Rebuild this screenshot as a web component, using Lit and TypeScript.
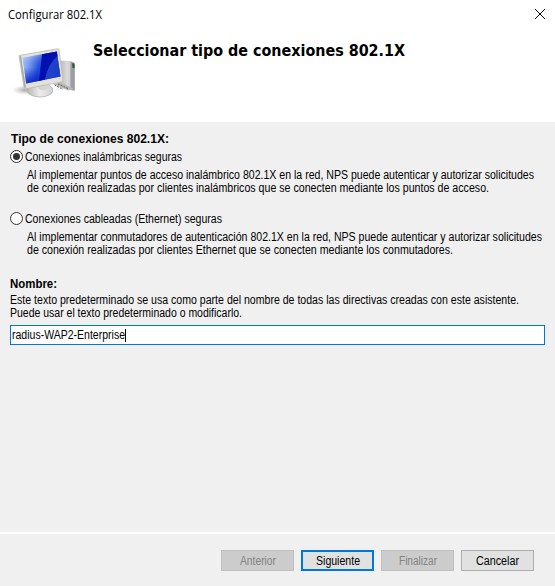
import { LitElement, html, css, svg } from "lit";
import { customElement, property, state } from "lit/decorators.js";

/* A single line of dialog text, condensed so that it fills a given width. */
@customElement("fit-line")
class FitLine extends LitElement {
  @property({ type: Number }) width = 0;
  @property() text = "";
  @state() private ratio = 1;

  static styles = css`
    :host { display: block; white-space: pre; }
    .box { display: block; }
    .line { display: inline-block; vertical-align: top; transform-origin: 0 0; }
  `;

  firstUpdated() {
    const span = this.renderRoot.querySelector(".line") as HTMLElement;
    this.ratio = this.width / span.getBoundingClientRect().width;
  }

  render() {
    return html`<span class="box" style="width:${this.width}px"><span class="line" style="transform:scaleX(${this.ratio})">${this.text}</span></span>`;
  }
}

interface Line { text: string; width: number; }
interface Option { label: Line; detail: Line[]; }

const options: Option[] = [
  {
    label: { text: "Conexiones inalámbricas seguras", width: 157 },
    detail: [
      { text: "Al implementar puntos de acceso inalámbrico 802.1X en la red, NPS puede autenticar y autorizar solicitudes", width: 507 },
      { text: "de conexión realizadas por clientes inalámbricos que se conecten mediante los puntos de acceso.", width: 462 },
    ],
  },
  {
    label: { text: "Conexiones cableadas (Ethernet) seguras", width: 197 },
    detail: [
      { text: "Al implementar conmutadores de autenticación 802.1X en la red, NPS puede autenticar y autorizar solicitudes", width: 515 },
      { text: "de conexión realizadas por clientes Ethernet que se conecten mediante los conmutadores.", width: 426 },
    ],
  },
];

const buttons = [
  { label: "Anterior", width: 36, kind: "off" },
  { label: "Siguiente", width: 44, kind: "main" },
  { label: "Finalizar", width: 38, kind: "off" },
  { label: "Cancelar", width: 43, kind: "" },
];

const computer = svg`
  <defs>
    <linearGradient id="screen" x1="0" y1="0" x2="1" y2="0.25">
      <stop offset="0" stop-color="#c4d8fc"/><stop offset=".25" stop-color="#7ea2f2"/>
      <stop offset=".5" stop-color="#2a55de"/><stop offset="1" stop-color="#0018b4"/>
    </linearGradient>
    <linearGradient id="shade" x1="0" y1="0" x2="0" y2="1">
      <stop offset="0" stop-color="#fff" stop-opacity=".3"/><stop offset=".45" stop-color="#0020c8" stop-opacity="0"/>
      <stop offset="1" stop-color="#0018c0" stop-opacity=".8"/>
    </linearGradient>
    <linearGradient id="tower" x1="0" y1="0" x2="1" y2="0">
      <stop offset="0" stop-color="#b0b0b0"/><stop offset=".55" stop-color="#dadada"/><stop offset="1" stop-color="#bcbcbc"/>
    </linearGradient>
    <linearGradient id="foot" x1="0" y1="0" x2="1" y2="0">
      <stop offset="0" stop-color="#b5b5b5"/><stop offset=".5" stop-color="#ededed"/><stop offset="1" stop-color="#d0d0d0"/>
    </linearGradient>
    <radialGradient id="shadow"><stop offset="0" stop-color="#777" stop-opacity=".65"/><stop offset="1" stop-color="#aaa" stop-opacity="0"/></radialGradient>
  </defs>
  <ellipse cx="13" cy="42" rx="13" ry="5" fill="url(#shadow)"/>
  <path d="M46 12.500 L58 13 L62.700 15 V42.500 L57 42 L46 36Z" fill="url(#tower)"/>
  <path d="M58.500 13.500 L62.700 15 V42.500 L58.500 42Z" fill="#9c9ca8"/>
  <path d="M60.300 15 L62.500 16 V20.500 L60.300 19.500Z" fill="#235b2a"/>
  <path d="M41 36 L49 34.500 L62 41 L56 42.500Z" fill="#b8b8b8"/>
  <path d="M42.500 37 L51 41.300 M46 36 L57 41" stroke="#666" stroke-width="1" stroke-dasharray="2 1"/>
  <ellipse cx="28" cy="42.200" rx="13" ry="6.800" fill="url(#foot)" stroke="#aaa" stroke-width=".7"/>
  <path d="M24 37 L37 35 L37 40 Q33 43.500 28 42Z" fill="#d6d6d6"/>
  <path d="M7 7.500 L45.500 .8 Q46.800 .6 47 2 L51 32 Q51.200 33.500 49.500 33.900 L14 40.800 Q12.300 41 12 39.500Z" fill="#e4e2dd" stroke="#b8b6b1" stroke-width=".8"/>
  <path d="M7.500 8.500 L9 8 L14 39.800 L12.500 40Z" fill="#aaa8a6"/>
  <path d="M10.500 9.800 L44.800 3.500 L48.500 28.500 L14.200 35.500Z" fill="url(#screen)"/>
  <path d="M10.500 9.800 L31.500 5.900 L27.500 32.800 L14.200 35.500Z" fill="url(#shade)"/>
  <path d="M30 6.200 L44.800 3.500 L45.500 8 Q36 16 33 31.600 L27 32.900Z" fill="#0010b0"/>
  <path d="M45.500 8 L48.500 28.500 L33 31.600 Q36 16 45.500 8Z" fill="#2348cc" opacity=".8"/>
`;

@customElement("app-root")
class AppRoot extends LitElement {
  @state() private selected = 0;

  static styles = css`
    :host {
      display: flex; flex-direction: column; box-sizing: border-box;
      width: 555px; height: 586px; overflow: hidden;
      background: #f0f0f0; color: #000;
      font: 12px/13px "Liberation Sans", Arial, sans-serif;
    }
    .header { height: 122px; background: #fff; flex: none; }
    .titlebar { display: flex; justify-content: space-between; padding: 7px 9px 0 8px; height: 31px; box-sizing: border-box; }
    .caption { font: 12px/16px "Open Sans", "Noto Sans", sans-serif; }
    .close { width: 12px; height: 12px; margin-top: 1px; }
    .banner { display: flex; align-items: flex-start; }
    .computer { width: 64px; height: 52px; margin: 17px 0 0 12px; }
    .heading { margin: 10px 0 0 17px; font: bold 16px/20px "DejaVu Sans Condensed", "DejaVu Sans", sans-serif; }
    .body { height: 410px; flex: none; box-sizing: border-box; padding: 11px 10px 0; }
    .section { font-weight: bold; margin-left: 1px; }
    .option { display: grid; grid-template-columns: 15px 1fr; height: 62px; align-content: start; padding-top: 4px; box-sizing: border-box; }
    .radio {
      width: 13px; height: 13px; box-sizing: border-box; border: 1px solid #333; border-radius: 50%;
      background: #fff; display: grid; place-items: center;
    }
    .radio.on::after { content: ""; width: 7px; height: 7px; border-radius: 50%; background: #333; }
    .label { padding-top: 1px; }
    .detail { grid-column: 2; margin: 5px 0 0 2px; }
    .name { margin: 8px 0 3px 0; }
    .field {
      display: flex; align-items: center; height: 20px; box-sizing: border-box; margin-top: 5px;
      border: 1px solid #0078d7; background: #fff; padding-left: 1px;
    }
    .caret { width: 1px; height: 13px; background: #000; }
    .footer {
      flex: 1; display: flex; justify-content: flex-end; gap: 7px; box-sizing: border-box;
      border-top: 2px solid #fff; padding: 16px 21px 0 0;
    }
    .button {
      width: 73px; height: 21px; box-sizing: border-box; border: 1px solid #adadad; background: #e1e1e1;
      display: flex; justify-content: center; align-items: center; padding-top: 2px;
    }
    .button.off { background: #ccc; border-color: #bfbfbf; color: #838383; }
    .button.main { border: 2px solid #0078d7; }
  `;

  private line(l: Line) {
    return html`<fit-line .text=${l.text} .width=${l.width}></fit-line>`;
  }

  render() {
    return html`
      <div class="header">
        <div class="titlebar">
          <div class="caption">${this.line({ text: "Configurar 802.1X", width: 94 })}</div>
          <svg class="close" viewBox="0 0 12 12"><path d="M1 1 L11 11 M11 1 L1 11" stroke="#000" stroke-width="1"/></svg>
        </div>
        <div class="banner">
          <svg class="computer" viewBox="0 0 64 52">${computer}</svg>
          <div class="heading">${this.line({ text: "Seleccionar tipo de conexiones 802.1X", width: 312 })}</div>
        </div>
      </div>
      <div class="body">
        <div class="section">${this.line({ text: "Tipo de conexiones 802.1X:", width: 158 })}</div>
        ${options.map((o, i) => html`
          <div class="option" @click=${() => (this.selected = i)}>
            <div class="radio ${i === this.selected ? "on" : ""}"></div>
            <div class="label">${this.line(o.label)}</div>
            <div class="detail">${o.detail.map((l) => this.line(l))}</div>
          </div>`)}
        <div class="section name">${this.line({ text: "Nombre:", width: 47 })}</div>
        ${this.line({ text: "Este texto predeterminado se usa como parte del nombre de todas las directivas creadas con este asistente.", width: 509 })}
        ${this.line({ text: "Puede usar el texto predeterminado o modificarlo.", width: 232 })}
        <div class="field">${this.line({ text: "radius-WAP2-Enterprise", width: 113 })}<div class="caret"></div></div>
      </div>
      <div class="footer">
        ${buttons.map((b) => html`<div class="button ${b.kind}">${this.line({ text: b.label, width: b.width })}</div>`)}
      </div>
    `;
  }
}
